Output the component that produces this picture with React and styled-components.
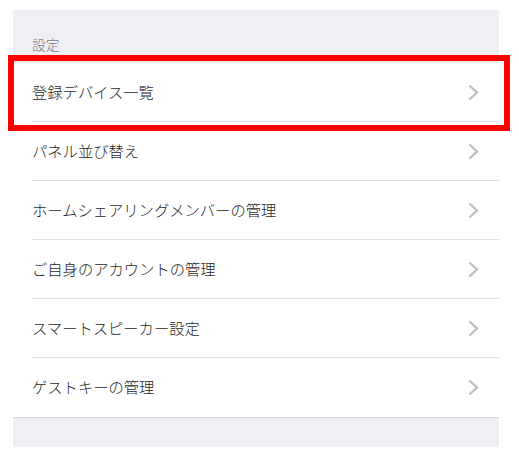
import React from "react";
import styled, { createGlobalStyle } from "styled-components";

const Global = createGlobalStyle`
  html, body { margin: 0; padding: 0; background: #ffffff; }
  body { font-family: "Noto Sans CJK JP", "Noto Sans", sans-serif; }
`;

const Page = styled.div`
  width: 519px;
  height: 457px;
  padding: 10px 20px 10px 13px;
  box-sizing: border-box;
  position: relative;
`;

const Panel = styled.div`
  background: #efeff4;
  height: 437px;
  display: flex;
  flex-direction: column;
`;

const SectionHeader = styled.div`
  height: 53px;
  box-sizing: border-box;
  padding: 25px 0 0 19px;
  font-size: 13.8px;
  font-weight: 300;
  line-height: 18px;
  color: #7d7d82;
`;

const List = styled.div`
  background: #ffffff;
  border-bottom: 1px solid #dcdcdf;
`;

const Row = styled.div`
  height: 59px;
  margin-left: 19px;
  padding-right: 19px;
  display: flex;
  align-items: center;
  justify-content: space-between;
  box-sizing: border-box;
  border-bottom: ${(p) => (p.$last ? "none" : "1px solid #e2e2e4")};
`;

const Label = styled.span`
  font-size: 15.3px;
  font-weight: 300;
  color: #1f1f1f;
  padding-bottom: 3px;
`;

const Chevron = styled.svg`
  width: 11px;
  height: 17px;
  flex: none;
  margin-right: 1px;
`;

const Highlight = styled.div`
  position: absolute;
  left: 8px;
  top: 55px;
  width: 502px;
  height: 76px;
  border: 6px solid #ff0000;
  box-sizing: border-box;
  pointer-events: none;
`;

const items = [
  "登録デバイス一覧",
  "パネル並び替え",
  "ホームシェアリングメンバーの管理",
  "ご自身のアカウントの管理",
  "スマートスピーカー設定",
  "ゲストキーの管理",
];

export default function App() {
  return (
    <>
      <Global />
      <Page>
        <Panel>
          <SectionHeader>設定</SectionHeader>
          <List>
            {items.map((t, i) => (
              <Row key={t} $last={i === items.length - 1}>
                <Label>{t}</Label>
                <Chevron viewBox="0 0 11 17">
                  <path d="M1.5 1.5 L9 8.5 L1.5 15.5" fill="none" stroke="#bdbdc2" strokeWidth="2.2" />
                </Chevron>
              </Row>
            ))}
          </List>
        </Panel>
        <Highlight />
      </Page>
    </>
  );
}
